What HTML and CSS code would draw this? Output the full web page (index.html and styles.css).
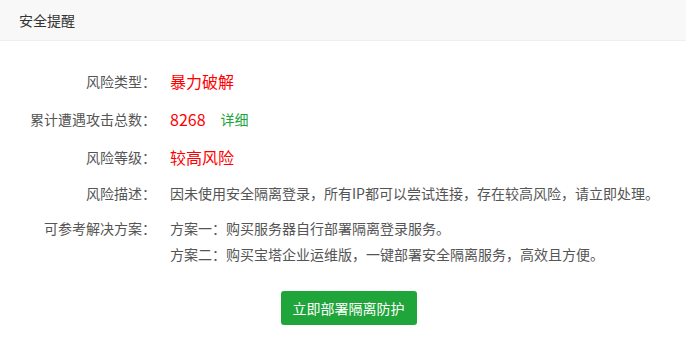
FILE: index.html
```html
<!DOCTYPE html>
<html lang="zh-CN">
<head>
    <meta charset="UTF-8">
    <meta name="viewport" content="width=device-width, initial-scale=1.0">
    <title>安全提醒</title>
    <link rel="stylesheet" href="styles.css">
</head>
<body>
    <div class="layer">
        <!-- Title bar -->
        <div class="layer-title">安全提醒</div>

        <div class="layer-content">
            <div class="row big">
                <span class="label">风险类型：</span>
                <span class="value red">暴力破解</span>
            </div>
            <div class="row big">
                <span class="label">累计遭遇攻击总数：</span>
                <span class="value red">8268</span>
                <a class="detail" href="#">详细</a>
            </div>
            <div class="row big">
                <span class="label">风险等级：</span>
                <span class="value red">较高风险</span>
            </div>
            <div class="row desc">
                <span class="label">风险描述：</span>
                <span class="value">因未使用安全隔离登录，所有IP都可以尝试连接，存在较高风险，请立即处理。</span>
            </div>
            <div class="row plan">
                <span class="label">可参考解决方案：</span>
                <div class="value">
                    <p>方案一：购买服务器自行部署隔离登录服务。</p>
                    <p>方案二：购买宝塔企业运维版，一键部署安全隔离服务，高效且方便。</p>
                </div>
            </div>

            <div class="actions">
                <button type="button" class="btn-green">立即部署隔离防护</button>
            </div>
        </div>
    </div>
</body>
</html>
```

FILE: styles.css
```css
body {
    margin: 0;
    font-family: "Noto Sans CJK SC", "Liberation Sans", sans-serif;
    font-size: 14px;
    color: #555;
    background: #fff;
}
.layer-title {
    height: 40px;
    line-height: 40px;
    padding-left: 19px;
    background-color: #f8f8f8;
    border-bottom: 1px solid #eee;
    color: #333;
    font-size: 14px;
}
.layer-content {
    padding-top: 26px;
}
.row {
    display: flex;
    align-items: flex-start;
    margin-bottom: 10px;
}
.row.big {
    line-height: 28px;
}
.row.desc {
    line-height: 24px;
}
.row.plan {
    line-height: 26px;
}
.label {
    width: 156px;
    flex-shrink: 0;
    text-align: right;
    color: #555;
}
.value {
    margin-left: 14px;
    color: #555;
}
.value p {
    margin: 0;
}
.row.big .value {
    font-size: 16px;
}
.red {
    color: #ff0000;
}
.row.big .value.red {
    color: #ff0000;
}
.detail {
    margin-left: 15px;
    color: #20a53a;
    text-decoration: none;
}
.actions {
    margin-top: 24px;
    padding-left: 11px;
    text-align: center;
}
.btn-green {
    height: 34px;
    padding: 0 12px;
    background-color: #20a53a;
    color: #fff;
    border: none;
    border-radius: 3px;
    font-family: inherit;
    font-size: 14px;
    cursor: pointer;
}
```
